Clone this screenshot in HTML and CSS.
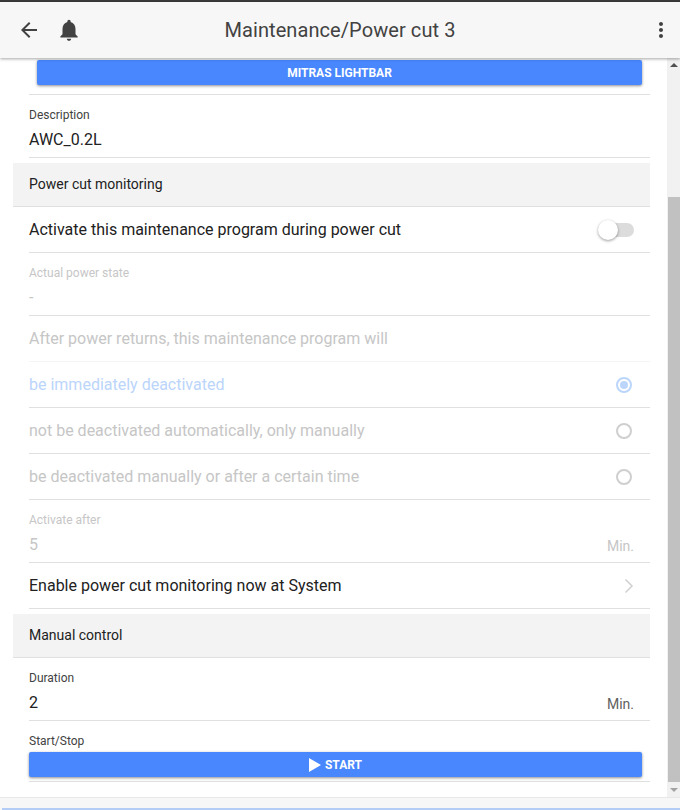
FILE: index.html
```html
<!DOCTYPE html>
<html lang="en">
<head>
<meta charset="utf-8">
<title>Maintenance/Power cut 3</title>
<link rel="stylesheet" href="styles.css">
</head>
<body>
<div class="app">
  <header class="topbar">
    <svg class="icon back" viewBox="0 0 24 24"><path d="M20 11H7.83l5.59-5.59L12 4l-8 8 8 8 1.41-1.41L7.83 13H20z"/></svg>
    <svg class="icon bell" viewBox="0 0 24 24"><path d="M12 22c1.1 0 2-.9 2-2h-4c0 1.1.9 2 2 2zm6-6v-5c0-3.07-1.63-5.64-4.5-6.32V4c0-.83-.67-1.5-1.500-1.500s-1.500.67-1.500 1.500v.68C7.640 5.360 6 7.920 6 11v5l-2 2v1h16v-1z"/></svg>
    <h1 class="title">Maintenance/Power cut 3</h1>
    <svg class="icon more" viewBox="0 0 24 24"><path d="M12 8c1.100 0 2-.9 2-2s-.9-2-2-2-2 .9-2 2 .9 2 2 2zm0 2c-1.100 0-2 .9-2 2s.9 2 2 2 2-.9 2-2-.9-2-2-2zm0 6c-1.100 0-2 .9-2 2s.9 2 2 2 2-.9 2-2-.9-2-2-2z"/></svg>
  </header>
  <div class="body">
    <main class="content">
      <div class="top-action"><button class="btn btn-top">MITRAS LIGHTBAR</button></div>

      <div class="row field">
        <div class="label">Description</div>
        <div class="value">AWC_0.2L</div>
      </div>

      <div class="section first">Power cut monitoring</div>

      <div class="row line">
        <span>Activate this maintenance program during power cut</span>
        <span class="toggle"><span class="knob"></span></span>
      </div>

      <div class="row field off">
        <div class="label">Actual power state</div>
        <div class="value">-</div>
      </div>

      <div class="row line off faint"><span>After power returns, this maintenance program will</span></div>

      <div class="row line selected">
        <span>be immediately deactivated</span>
        <span class="radio checked"></span>
      </div>
      <div class="row line off">
        <span>not be deactivated automatically, only manually</span>
        <span class="radio"></span>
      </div>
      <div class="row line off">
        <span>be deactivated manually or after a certain time</span>
        <span class="radio"></span>
      </div>

      <div class="row field off">
        <div class="label">Activate after</div>
        <div class="value split"><span>5</span><span class="unit">Min.</span></div>
      </div>

      <div class="row line">
        <span>Enable power cut monitoring now at System</span>
        <svg class="chev" viewBox="0 0 12 16"><path d="M2.500 1.500 9 8l-6.500 6.500"/></svg>
      </div>

      <div class="section">Manual control</div>

      <div class="row field">
        <div class="label">Duration</div>
        <div class="value split"><span>2</span><span class="unit">Min.</span></div>
      </div>

      <div class="row action">
        <div class="label">Start/Stop</div>
        <button class="btn btn-start">
          <svg class="play" viewBox="0 0 12 14"><path d="M0 0l12 7-12 7z"/></svg>
          START
        </button>
      </div>
    </main>
    <div class="scrollbar">
      <span class="arrow up"></span>
      <div class="track"><div class="thumb"></div></div>
      <span class="arrow down"></span>
    </div>
  </div>
  <footer class="bottom"><div class="bottom-line"></div></footer>
</div>
</body>
</html>
```
FILE: styles.css
```css
* { box-sizing: border-box; }
html, body { margin: 0; padding: 0; height: 100%; overflow: hidden; }
body { font-family: Roboto, "Liberation Sans", sans-serif; color: #212121; background: #fff; }

.app { width: 680px; height: 810px; display: flex; flex-direction: column; border-top: 2px solid #3a3a3a; }

.topbar {
  height: 56px; flex: none; display: flex; align-items: center;
  background: #f7f7f7; box-shadow: 0 1px 3px rgba(0,0,0,.35);
  position: relative; z-index: 2; padding: 0 7px 0 17px;
}
.icon { width: 24px; height: 24px; fill: #424242; flex: none; }
.bell { margin-left: 15px; width: 26px; height: 26px; }
.title { flex: 1; margin: 0; text-align: center; font-size: 20px; font-weight: 400; color: #424242; padding-right: 51px; line-height: 24px; letter-spacing: .08px; }

.body { flex: 1; min-height: 0; display: flex; }
.content { flex: 1; min-width: 0; padding: 2px 17px 0 13px; overflow: hidden; }

.top-action { margin-left: 16px; padding: 0 8px 8px; border-bottom: 1px solid #e0e0e0; height: 35px; }
.btn {
  display: flex; align-items: center; justify-content: center; width: 100%; border: 0; border-radius: 2px;
  background: #4887fe; color: #fff; font: 700 12px Roboto, "Liberation Sans", sans-serif;
  box-shadow: 0 1px 3px rgba(0,0,0,.45);
}
.btn-top { height: 25px; }
.btn-start { height: 25px; margin-top: 4px; width: 613px; gap: 4px; }
.play { width: 12px; height: 14px; fill: #fff; }

.row { margin-left: 16px; border-bottom: 1px solid #e0e0e0; font-size: 16px; }
.line { height: 46px; display: flex; align-items: center; justify-content: space-between; padding-right: 16px; }
.field { height: 63px; padding-top: 13px; }
.label { font-size: 12px; line-height: 14px; color: #424242; }
.value { font-size: 16px; line-height: 20px; margin-top: 8px; color: #212121; }
.split { display: flex; justify-content: space-between; padding-right: 16px; }
.unit { font-size: 14px; color: #616161; padding-top: 1px; }

.section {
  margin-top: 5px; height: 44px; background: #f3f3f3; border-bottom: 1px solid #e0e0e0;
  padding: 0 0 2px 16px; display: flex; align-items: center; font-size: 14px; color: #212121;
}

.off, .off .label, .off .value, .off .unit { color: #c6c6c6; }
.faint { border-bottom-color: #f5f5f5; }
.selected { color: #bbd5fb; }

.toggle { width: 34px; height: 14px; border-radius: 7px; background: #dcdcdc; position: relative; }
.knob { position: absolute; left: -2px; top: -3px; width: 20px; height: 20px; border-radius: 50%; background: #fff; box-shadow: 0 1px 3px rgba(0,0,0,.4); }

.radio { width: 16px; height: 16px; border: 2px solid #cfcfcf; border-radius: 50%; margin-right: 2px; position: relative; }
.radio.checked { border-color: #bbd5fb; }
.radio.checked::after { content: ""; position: absolute; left: 2px; top: 2px; width: 8px; height: 8px; border-radius: 50%; background: #bbd5fb; }

.chev { width: 12px; height: 16px; fill: none; stroke: #d0d0d0; stroke-width: 1.500; margin-right: -1px; }

.action { height: 61px; padding-top: 13px; }

.scrollbar { width: 13px; flex: none; background: #f1f1f1; display: flex; flex-direction: column; align-items: center; }
.arrow { width: 0; height: 0; border-left: 4px solid transparent; border-right: 4px solid transparent; flex: none; }
.arrow.up { border-bottom: 4px solid #505050; margin: 5px 0 8px; }
.arrow.down { border-top: 4px solid #a3a3a3; margin: 6px 0 5px; }
.track { flex: 1; width: 100%; padding-top: 122px; }
.thumb { height: 100%; margin: 0 0 0 1px; background: #c1c1c1; }

.bottom { height: 13px; flex: none; background: #f7f7f7; border-top: 1px solid #e8e8e8; padding: 10px 0 0 2px; position: relative; z-index: 1; }
.bottom-line { height: 2px; background: #b4cdf6; }
```
